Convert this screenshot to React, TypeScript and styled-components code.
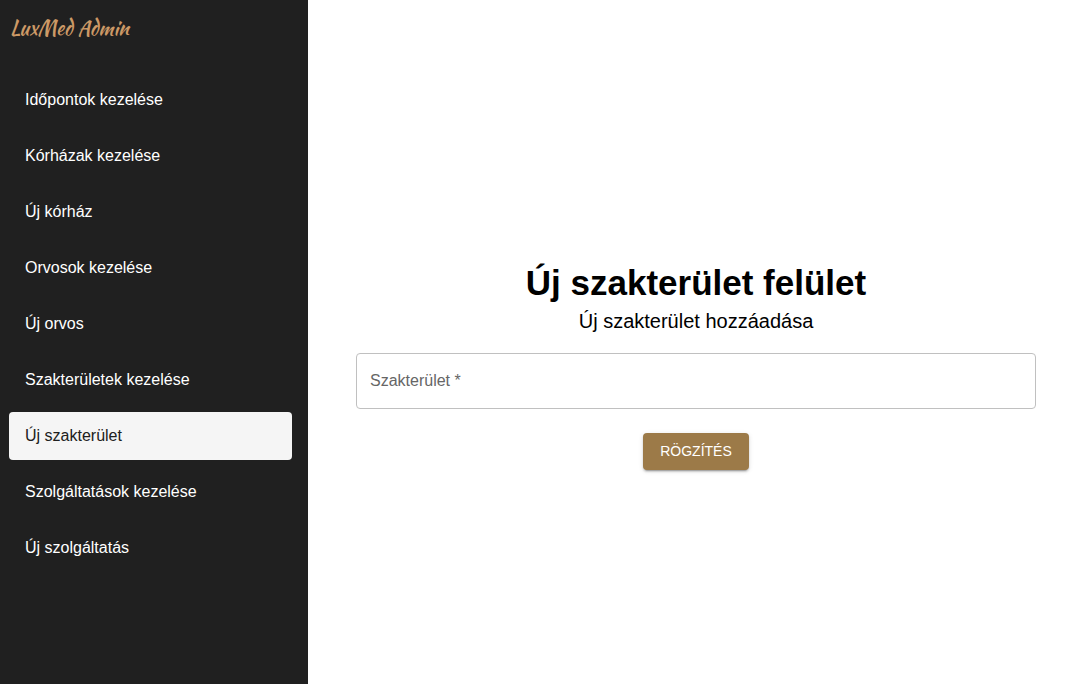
import React, { useState } from "react";
import styled, { createGlobalStyle } from "styled-components";

const GlobalStyle = createGlobalStyle`
  *, *::before, *::after {
    box-sizing: border-box;
  }
  body {
    margin: 0;
    background: #ffffff;
    color: #000000;
    font-family: "Liberation Sans", Arial, sans-serif;
    font-size: 16px;
  }
`;

const Layout = styled.div`
  display: grid;
  grid-template-columns: 2fr 5fr;
  min-height: 100vh;
`;

const Sidebar = styled.aside`
  background: #202020;
  padding: 8px 16px 8px 9px;
`;

const Brand = styled.a`
  display: block;
  padding: 0 1px;
  color: #cc9966;
  font-family: "Kaushan Script", Lato, cursive;
  font-size: 20px;
  font-weight: 400;
  line-height: 40px;
  text-decoration: none;
`;

const NavList = styled.ul`
  display: flex;
  flex-direction: column;
  gap: 8px;
  margin: 28px 0 0;
  padding: 0;
  list-style: none;
`;

const NavLink = styled.a<{ $active: boolean }>`
  display: block;
  padding: 12px 16px;
  border-radius: 4px;
  background: ${({ $active }) => ($active ? "#f5f5f5" : "transparent")};
  color: ${({ $active }) => ($active ? "#202020" : "#ffffff")};
  line-height: 24px;
  text-decoration: none;
`;

const Main = styled.main`
  display: flex;
  flex-direction: column;
  align-items: center;
  justify-content: center;
  padding: 48px 42px 0 48px;
`;

const Title = styled.h1`
  margin: 0;
  font-size: 35px;
  line-height: 40px;
  text-align: center;
`;

const Subtitle = styled.p`
  margin: 0;
  font-size: 20px;
  line-height: 36px;
  text-align: center;
`;

const Form = styled.form`
  display: flex;
  flex-direction: column;
  align-items: center;
  gap: 24px;
  width: 100%;
  margin-top: 14px;
`;

const Field = styled.div`
  position: relative;
  width: 100%;
`;

const Input = styled.input`
  display: block;
  width: 100%;
  height: 56px;
  padding: 16px 14px;
  border: 1px solid #c0c0c0;
  border-radius: 4px;
  background: transparent;
  font: inherit;
`;

const FloatingLabel = styled.label<{ $hidden: boolean }>`
  position: absolute;
  top: 16px;
  left: 14px;
  color: #666666;
  line-height: 24px;
  pointer-events: none;
  visibility: ${({ $hidden }) => ($hidden ? "hidden" : "visible")};
`;

const SubmitButton = styled.button`
  padding: 6px 17px;
  border: 0;
  border-radius: 4px;
  background: #9c7a48;
  box-shadow:
    0 3px 1px -2px rgba(0, 0, 0, 0.2),
    0 2px 2px 0 rgba(0, 0, 0, 0.14),
    0 1px 5px 0 rgba(0, 0, 0, 0.12);
  color: #ffffff;
  font-family: inherit;
  font-size: 14px;
  line-height: 25px;
  text-transform: uppercase;
  cursor: pointer;
`;

const navItems = [
  { href: "#idopontok", label: "Időpontok kezelése" },
  { href: "#korhazak", label: "Kórházak kezelése" },
  { href: "#uj-korhaz", label: "Új kórház" },
  { href: "#orvosok", label: "Orvosok kezelése" },
  { href: "#uj-orvos", label: "Új orvos" },
  { href: "#szakteruletek", label: "Szakterületek kezelése" },
  { href: "#uj-szakterulet", label: "Új szakterület" },
  { href: "#szolgaltatasok", label: "Szolgáltatások kezelése" },
  { href: "#uj-szolgaltatas", label: "Új szolgáltatás" },
];

export default function App() {
  const [active, setActive] = useState("#uj-szakterulet");
  const [name, setName] = useState("");

  return (
    <>
      <GlobalStyle />
      <Layout>
        <Sidebar>
          <Brand href="#">LuxMed Admin</Brand>
          <nav>
            <NavList>
              {navItems.map(({ href, label }) => (
                <li key={href}>
                  <NavLink
                    href={href}
                    $active={href === active}
                    aria-current={href === active ? "page" : undefined}
                    onClick={() => setActive(href)}
                  >
                    {label}
                  </NavLink>
                </li>
              ))}
            </NavList>
          </nav>
        </Sidebar>
        <Main>
          <Title>Új szakterület felület</Title>
          <Subtitle>Új szakterület hozzáadása</Subtitle>
          <Form onSubmit={(event) => event.preventDefault()}>
            <Field>
              <Input
                id="specialty"
                type="text"
                required
                value={name}
                onChange={(event) => setName(event.target.value)}
              />
              <FloatingLabel htmlFor="specialty" $hidden={name !== ""}>
                Szakterület *
              </FloatingLabel>
            </Field>
            <SubmitButton type="submit">Rögzítés</SubmitButton>
          </Form>
        </Main>
      </Layout>
    </>
  );
}
